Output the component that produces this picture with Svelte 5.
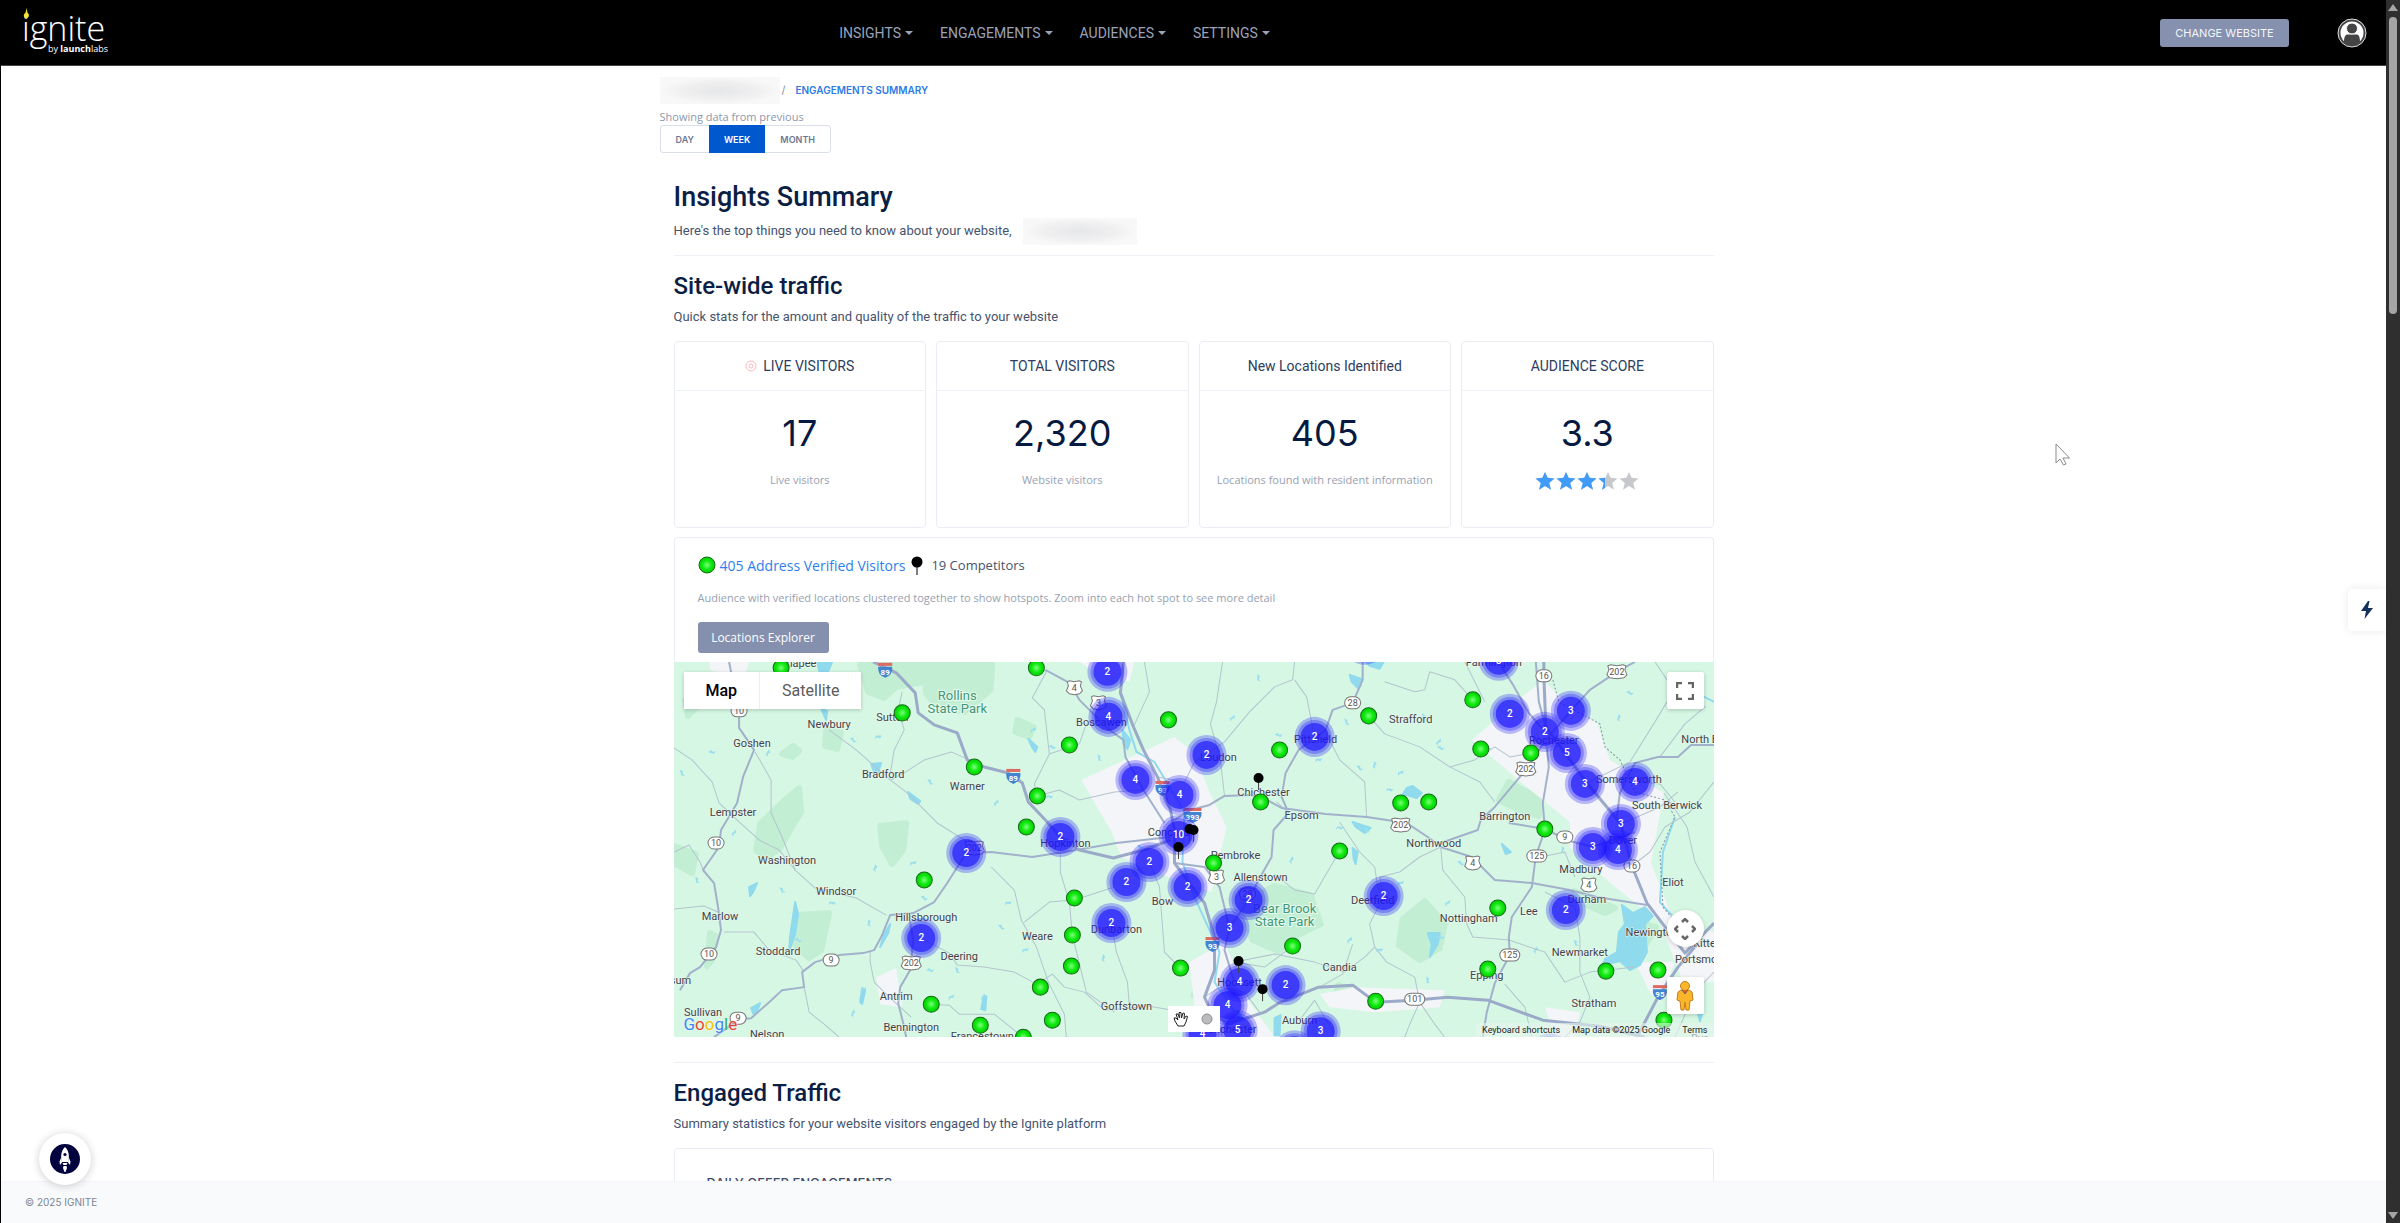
<script>
  const menus = ['INSIGHTS', 'ENGAGEMENTS', 'AUDIENCES', 'SETTINGS'];
  const periods = ['DAY', 'WEEK', 'MONTH'];
  let period = $state('WEEK');
  let mapType = $state('Map');

  const stats = [
    { title: 'LIVE VISITORS', value: '17', note: 'Live visitors', live: true },
    { title: 'TOTAL VISITORS', value: '2,320', note: 'Website visitors' },
    { title: 'New Locations Identified', value: '405', note: 'Locations found with resident information' },
    { title: 'AUDIENCE SCORE', value: '3.3', score: 3.3 }
  ];
  const star = 'M9 0L11.6 5.800L18.500 6.400L13.200 10.900L15 17.800L9 14.100L3 17.800L4.800 10.900L-.5 6.400L6.400 5.800Z';

  const visitors = [
    [107, 6], [228, 51], [362, 6], [494, 58], [395, 83], [300, 105], [363, 134], [352, 165], [250, 218],
    [400, 236], [398, 273], [397, 304], [506, 306], [366, 325], [257, 342], [306, 363], [378, 358], [349, 375],
    [694, 54], [798, 38], [605, 88], [806, 87], [856, 91], [586, 140], [726, 141], [754, 140], [870, 167],
    [665, 189], [539, 201], [823, 246], [618, 284], [813, 307], [931, 309], [983, 308], [701, 339], [989, 358]
  ];
  const clusters = [
    [433, 10, 2], [434, 55, 4], [461, 118, 4], [505, 133, 4], [504, 173, 10], [386, 175, 2], [292, 191, 2],
    [475, 200, 2], [452, 220, 2], [513, 225, 2], [437, 261, 2], [247, 276, 2], [824, -1, 3], [835, 52, 2],
    [896, 49, 3], [870, 70, 2], [892, 91, 5], [640, 75, 2], [532, 93, 2], [910, 122, 3], [960, 120, 4],
    [946, 162, 3], [918, 185, 3], [943, 188, 4], [574, 238, 2], [709, 234, 2], [891, 248, 2], [555, 266, 3],
    [565, 320, 4], [611, 323, 2], [553, 343, 4], [528, 372, 4], [563, 368, 5], [646, 369, 3], [690, -17, ''],
    [620, 388, ''], [875, 391, '']
  ];
  const pins = [[504, 185], [515, 167], [519, 168], [584, 116], [564, 299], [588, 327]];

  const towns = [
    ['Newbury', 155, 62], ['Goshen', 78, 81], ['Sutton', 218, 55], ['Bradford', 209, 112], ['Warner', 293, 124],
    ['Lempster', 59, 150], ['Washington', 113, 198], ['Windsor', 162, 229], ['Hillsborough', 252, 255],
    ['Marlow', 46, 254], ['Stoddard', 104, 289], ['Deering', 285, 294], ['Antrim', 222, 334],
    ['Bennington', 237, 365], ['Francestown', 308, 374], ['Sullivan', 29, 350], ['Nelson', 93, 372],
    ['Gilsum', 0, 318], ['Sunapee', 121, 1], ['Boscawen', 427, 60], ['Hopkinton', 391, 181],
    ['Concord', 494, 170], ['Bow', 488, 239], ['Weare', 363, 274], ['Dunbarton', 442, 267],
    ['Goffstown', 452, 344], ['Farmington', 819, 0], ['Strafford', 736, 57], ['Pittsfield', 641, 77],
    ['Loudon', 544, 95], ['Rochester', 879, 78], ['North Berwick', 1041, 77], ['Chichester', 589, 130],
    ['Epsom', 627, 153], ['Somersworth', 954, 117], ['South Berwick', 992, 143], ['Barrington', 830, 154],
    ['Northwood', 759, 181], ['Pembroke', 561, 193], ['Allenstown', 586, 215], ['Deerfield', 698, 238],
    ['Dover', 948, 178], ['Madbury', 906, 207], ['Eliot', 998, 220], ['Durham', 912, 237], ['Lee', 854, 249],
    ['Nottingham', 794, 256], ['Newington', 977, 270], ['Kittery', 1034, 281], ['Portsmouth', 1029, 297],
    ['Newmarket', 905, 290], ['Epping', 812, 313], ['Candia', 665, 305], ['Hooksett', 565, 320],
    ['Stratham', 919, 341], ['Auburn', 625, 358], ['Manchester', 553, 367], ['Rye', 1025, 376]
  ];
  const parks = [['Rollins', 283, 34], ['State Park', 283, 47], ['Bear Brook', 610, 247], ['State Park', 610, 260]];
  const interstates = [['89', 211, 8], ['89', 339, 114], ['93', 488, 126], ['393', 518, 153], ['93', 538, 282], ['95', 985, 330]];
  const usRoutes = [
    ['4', 400, 26], ['3', 424, 41], ['202', 300, 186], ['202', 237, 301], ['202', 942, 10], ['202', 851, 107],
    ['202', 726, 163], ['4', 798, 201], ['3', 542, 215], ['4', 914, 223]
  ];
  const stateRoutes = [
    ['10', 65, 49], ['10', 42, 181], ['10', 35, 292], ['9', 157, 298], ['9', 64, 356], ['16', 869, 14],
    ['28', 678, 41], ['9', 890, 175], ['125', 862, 194], ['16', 957, 204], ['28', 573, 232], ['125', 835, 293],
    ['101', 740, 337]
  ];

  const highways = [
    'M199 0L222 11L241 31L244 51L260 63L283 71L293 98L310 105L334 111L348 121L354 140L371 158L386 175L405 188L439 196L469 188L496 178',
    'M449 0L446 31L459 65L469 88L483 115L496 148L500 168L500 201L520 228L530 241L540 275L540 308L530 335L536 348L553 362',
    'M869 0L869 14L871 65L912 121L946 162L957 204L972 241L1010 291L1039 261',
    'M553 362L590 350L604 341L644 325L678 323L701 340L739 338L773 335L813 338L868 358L925 364L970 375',
    'M962 375L983 335L1003 305L1023 281'
  ];
  const mainRoads = [
    'M55 0L60 25L65 49L65 66L80 88L69 115L63 141L47 168L45 185L29 208L40 221L44 245L47 268L42 285L26 305L16 311L6 328',
    'M496 175L469 178L442 181L402 188L358 195L317 190L292 191L273 221L260 240L239 251L216 253L207 275L200 288L189 291L165 293L141 300L128 310L130 325L108 328L94 341L77 356L65 357L40 375',
    'M235 255L239 278L236 308L226 325L224 341L229 361L232 375',
    'M371 8L395 21L405 38L435 68L449 78L451 95L469 128L490 161',
    'M500 158L516 148L535 143L550 134L575 133L587 135L607 146L651 152L692 155L732 161L753 175L766 185L797 195L820 218L857 221L895 228L922 235L972 243',
    'M688 0L688 18L678 41L658 48L651 68L624 88L611 111L607 135L614 151L599 168L597 195L584 218L574 238L555 266L550 288L560 321',
    'M766 181L803 168L806 158L820 145L851 108L871 78L896 49L915 28L942 10L960 0',
    'M824 1L837 21L854 51L870 70M861 0L864 40L871 65',
    'M871 78L874 105L868 141L870 168L861 194L857 225L837 255L834 275L835 293L820 321L812 350L808 375',
    'M942 155L945 131L960 101L983 95L1003 95L1016 83L1039 83',
    'M834 161L870 167L895 179L918 185L960 170',
    'M500 201L530 205L545 225L555 266'
  ];
  const minorRoads = [
    'M81 90L97 118L97 151L108 175L121 208L141 226L182 236L212 253',
    'M155 68L182 88L199 103L216 118L233 131L263 161L290 178L300 185',
    'M0 86L18 98L38 120L45 141L65 160L85 178L105 188L121 208',
    'M216 118L230 111L250 98L277 90L295 98', 'M216 112L220 88L230 68L224 48L228 30',
    'M0 190L15 183L26 200L30 210', 'M0 247L30 244L44 250M50 270L80 270L95 288L122 298L130 310',
    'M130 325L135 350L150 362L165 375', 'M247 276L275 291L283 303L310 305L340 310L362 322L378 312L390 325L410 330L430 348L475 344L510 350',
    'M363 134L385 128L405 138L440 130L469 128', 'M360 0L372 10L358 36L370 48L375 92L360 122L363 134',
    'M375 92L405 82L412 62L430 60', 'M317 205L340 228L347 258L362 285L374 320L390 352L392 375',
    'M350 260L375 240L400 238L440 225M386 175L386 210L395 240L398 273L412 330L440 350',
    'M437 261L442 290L453 320L455 344M475 200L485 225L490 290L510 310',
    'M459 65L475 30L470 0M483 115L510 120L520 100L550 80L575 50L600 25L618 18L620 0',
    'M620 18L632 35L640 75M548 0L542 40L536 62L546 100L550 134', 'M694 54L710 72L745 85L775 105L805 120L820 140',
    'M651 70L665 98L690 120L692 155M614 151L602 140', 'M665 160L685 190L700 205L703 225L709 234L695 262L700 285L690 295L670 310L640 300L600 292L560 300',
    'M709 234L705 215L725 210L745 195L766 185L768 208L790 235L792 262L798 275L834 278L870 290L890 320L915 310L960 305',
    'M678 282L668 312L645 325M700 285L712 300L740 315L745 340L760 362L770 375M745 340L735 362L730 375',
    'M790 0L800 20L810 40M710 20L740 30L750 28L755 10L780 18L798 38',
    'M775 105L800 98L820 85L835 95L851 92', 'M866 195L890 190L900 215M870 230L900 245L905 275L905 310L915 335L905 360L890 375',
    'M1039 120L1015 150L990 165L975 190L957 204M989 131L1012 165L1020 200L1039 235', 'M980 0L1000 30L1030 45L1010 62L985 95',
    'M1000 140L985 122L960 120M1039 310L1020 330L1000 375M946 162L985 145L1003 130',
    'M257 342L275 343L285 352L320 352L345 372M237 355L215 335L200 320L196 300L196 290',
    'M585 350L570 330L545 325L530 335M625 358L640 338L660 372M857 375L850 345L830 322',
    'M618 284L590 305L560 300M665 189L640 232L620 228L600 212M912 121L955 100L980 60L1010 10'
  ];
  const forests = [
    'M186 3H258L262 18L222 25L210 36L194 30Z', 'M250 3H318L316 28L290 50L264 46L252 32Z',
    'M112 137L125 126L127 150L118 165L106 186L92 196L82 188L86 162Z', 'M206 164L232 161L229 188L218 202L208 184Z',
    'M123 253L155 251L147 288L135 296L121 283Z', 'M36 271L42 274L38 298L33 304Z', 'M108 92L119 84L125 89L118 95Z',
    'M566 242L600 224L636 233L646 262L625 272L604 289L578 278Z', 'M728 257L750 239L770 262L765 286L745 298L724 283Z',
    'M457 162L469 149L478 160L469 174Z', 'M834 120L866 138L864 154L843 147L824 138Z', 'M899 229L940 246L930 251L903 239Z',
    'M526 317L541 323L532 341L519 333Z', 'M343 58L359 65L355 75L341 70Z', 'M11 38L22 46L14 54Z', 'M0 184L22 192L18 211L0 201Z',
    'M959 259L981 265L972 281L958 273Z', 'M152 68L167 71L163 87L151 84Z', 'M664 323L686 333L678 341L659 337Z'
  ];
  const urban = [
    'M407 118L500 75L519 90L535 130L552 165L537 230L510 222L447 195L437 170Z',
    'M797 78L868 18L888 38L922 61L935 98L989 131L976 201L1000 262L1039 270V320L1008 320L985 260L940 225L895 185L895 160L847 121Z',
    'M35 0H75L72 10L58 15L36 8Z', 'M405 0H460L455 20L420 10Z', 'M202 315L222 306L228 345L206 342Z',
    'M515 300L550 280L575 340L600 375H510L520 345Z', 'M645 332L680 325L770 328L765 345L700 350L655 345Z',
    'M870 345L905 350L900 375H880Z', 'M960 300L1000 300L985 340L975 330Z'
  ];
  const lakes = [
    'M947 243L958 251L970 245L978 254L970 262L972 290L965 303L955 308L945 299L928 303L930 297L942 290L944 270L950 262Z',
    'M727 134L732 126L738 124L747 131L742 136L732 133Z', 'M143 0L158 0L153 12L145 9Z',
    'M147 47L153 49L152 58Z', 'M234 130L246 139L244 142L236 137Z', 'M121 240L124 252L121 272L115 289L116 274Z',
    'M210 272L216 262L214 271L206 285Z', 'M75 225L83 221L79 230L76 234Z', 'M77 346L86 341L83 349L80 353Z',
    'M188 326L191 328L188 342L186 340Z', 'M678 160L696 166L690 171L681 165Z', 'M678 186L683 190L681 202L679 197Z',
    'M675 13L687 17L683 26L677 20Z', 'M827 182L836 190L831 192Z', 'M753 271L765 271L763 282L755 295L757 282Z',
    'M354 77L363 85L361 90L357 84Z', 'M309 336L312 334L311 348L307 347Z', 'M197 102L207 101L204 110L201 113Z',
    'M600 356L606 353L605 373H600Z', 'M448 68L456 78L453 87L449 82Z', 'M691 0L709 0L705 7L695 4Z',
    'M1022 348L1027 352L1025 359Z', 'M562 348L568 356L565 360Z'
  ];
  const ponds = [
    [38, 90], [8, 111], [94, 91], [204, 75], [179, 78], [233, 55], [359, 68], [378, 85], [425, 96], [322, 141],
    [375, 135], [256, 120], [201, 206], [239, 201], [250, 236], [195, 261], [189, 328], [256, 308], [283, 308],
    [309, 335], [334, 241], [327, 265], [429, 296], [277, 335], [124, 278], [23, 218], [60, 171], [158, 241],
    [108, 228], [179, 351], [351, 288], [466, 185], [584, 16], [558, 56], [604, 73], [672, 60], [685, 25],
    [644, 98], [685, 106], [700, 103], [726, 111], [766, 86], [749, 55], [764, 80], [665, 166], [692, 168],
    [617, 198], [726, 221], [786, 201], [888, 188], [773, 241], [766, 275], [901, 281], [861, 288], [705, 288],
    [813, 85], [944, 56], [1006, 31], [955, 31], [753, 318], [675, 278], [715, 128]
  ];
</script>

<div class="screen">
  <div class="page">
    <header class="topbar">
      <a class="brand" href="#home" aria-label="ignite by launchlabs">
        <svg class="flame" viewBox="0 0 8 12" aria-hidden="true"><path d="M4 0C4.6 2.6 5 4.4 5.2 6C8 7.4 6.8 12 3.8 12C.6 12 0 8 2.4 6.4C3.2 4.6 3.8 3 4 0Z" /></svg>
        <span class="brand-name">ignite</span>
        <span class="brand-by">by <b>launch</b>labs</span>
      </a>
      <nav class="menus" aria-label="Main">
        {#each menus as m}
          <button class="menu">{m}<i class="caret"></i></button>
        {/each}
      </nav>
      <div class="account">
        <button class="change">CHANGE WEBSITE</button>
        <button class="avatar" aria-label="Account">
          <svg viewBox="0 0 30 30"><circle cx="15" cy="15" r="14" fill="#444447" stroke="#ddd" /><circle cx="15" cy="15" r="11.5" fill="#fff" /><path d="M7 24C7 17 9.500 16 12 16.500H18C21 16 23 17 23 24L20 26L15 28L10 26Z" fill="#444447" /><circle cx="15" cy="10.500" r="5.500" fill="#444447" stroke="#fff" /></svg>
        </button>
      </div>
    </header>

    <main>
      <div class="container">
        <nav class="crumbs" aria-label="Breadcrumb">
          <span class="redacted"></span>
          <span class="slash">/</span>
          <a href="#engagements">ENGAGEMENTS SUMMARY</a>
        </nav>
        <p class="showing">Showing data from previous</p>
        <div class="periods">
          {#each periods as p}
            <button class:active={p === period} onclick={() => (period = p)}>{p}</button>
          {/each}
        </div>

        <div class="content">
          <section class="intro">
            <h1>Insights Summary</h1>
            <p>Here's the top things you need to know about your website, <span class="redacted short"></span></p>
          </section>
          <hr />
          <section>
            <h2>Site-wide traffic</h2>
            <p class="lead">Quick stats for the amount and quality of the traffic to your website</p>
            <div class="cards">
              {#each stats as s}
                <article class="card">
                  <h3>
                    {#if s.live}
                      <svg class="pulse" viewBox="0 0 12 12" aria-hidden="true"><circle cx="6" cy="6" r="5" /><circle cx="6" cy="6" r="2" /></svg>
                    {/if}
                    {s.title}
                  </h3>
                  <strong>{s.value}</strong>
                  {#if s.score}
                    <svg class="stars" viewBox="0 0 102 18" role="img" aria-label="3.3 out of 5">
                      <defs><clipPath id="filled"><rect x="-1" width="70" height="18" /></clipPath></defs>
                      {#each [0, 21, 42, 63, 84] as x}<path d={star} transform="translate({x} 0)" fill="#c6c8cb" />{/each}
                      <g clip-path="url(#filled)">
                        {#each [0, 21, 42, 63] as x}<path d={star} transform="translate({x} 0)" fill="#419bf9" />{/each}
                      </g>
                    </svg>
                  {:else}
                    <p>{s.note}</p>
                  {/if}
                </article>
              {/each}
            </div>

            <article class="map-card">
              <div class="map-head">
                <div class="legend">
                  <svg class="dot" viewBox="0 0 18 18" aria-hidden="true"><circle cx="9" cy="9" r="8" fill="url(#green)" stroke="#176d17" /></svg>
                  <a href="#verified">405 Address Verified Visitors</a>
                  <svg class="pin" viewBox="0 0 12 19" aria-hidden="true"><path d="M6 8V19" stroke="#555" stroke-width="1.500" /><circle cx="6" cy="6" r="5.500" /></svg>
                  <span>19 Competitors</span>
                </div>
                <p>Audience with verified locations clustered together to show hotspots. Zoom into each hot spot to see more detail</p>
                <button class="explorer">Locations Explorer</button>
              </div>
              <div class="map">
                <svg class="canvas" viewBox="0 0 1039 375" preserveAspectRatio="xMidYMid slice" role="img" aria-label="Map of visitor locations">
                  <defs>
                    <radialGradient id="green"><stop offset="0" stop-color="#7dff7d" /><stop offset=".55" stop-color="#12ea12" /><stop offset="1" stop-color="#00cf00" /></radialGradient>
                  </defs>
                  <rect width="1039" height="375" fill="#d6f7e3" />
                  {#each forests as d}<path {d} class="forest" />{/each}
                  {#each urban as d}<path {d} fill="#f4f5f8" />{/each}
                  {#each lakes as d}<path {d} class="lake" />{/each}
                  {#each ponds as [x, y], i}
                    <path d="M-4 0L-1 -2L1 0L4 -1L2 2L-1 1Z" transform="translate({x} {y}) rotate({(i * 53) % 180})" fill="#9adff0" />
                  {/each}
                  <path class="river" d="M446 31L455 68L462 90L480 100L510 150L508 200L520 235L545 290L540 320L560 350M1039 40L1000 20M1000 155L988 190L985 240L1005 262L1039 285" />
                  <path class="border" d="M878 18L884 40L925 62L930 85L945 98L960 130L990 138L1000 155L985 190L988 245L1005 265" />
                  {#each minorRoads as d}<path {d} class="minor" />{/each}
                  {#each mainRoads as d}<path {d} class="major" />{/each}
                  {#each highways as d}<path {d} class="highway" />{/each}

                  {#each stateRoutes as [n, x, y]}
                    <rect x={x - (n.length > 2 ? 10 : 8)} y={y - 6} width={n.length > 2 ? 20 : 16} height="12" rx="6" class="shield" />
                    <text {x} y={y + 3} class="route">{n}</text>
                  {/each}
                  {#each usRoutes as [n, x, y]}
                    <path transform="translate({x} {y})" d={n.length > 2 ? 'M-9 -6L-6 -7L0 -6L6 -7L9 -6L8 -2L10 3L7 6L0 7L-7 6L-10 3L-8 -2Z' : 'M-7 -6L-5 -7L0 -6L5 -7L7 -6L6 -2L8 3L5 6L0 7L-5 6L-8 3L-6 -2Z'} class="shield" />
                    <text {x} y={y + 3} class="route">{n}</text>
                  {/each}
                  {#each interstates as [n, x, y]}
                    <g transform="translate({x} {y})">
                      <path d={n.length > 2 ? 'M-9 -3H9Q10 5 0 8Q-10 5 -9 -3Z' : 'M-7 -3H7Q8 5 0 8Q-8 5 -7 -3Z'} fill="#4484cf" />
                      <rect x={n.length > 2 ? -9 : -7} y="-7" width={n.length > 2 ? 18 : 14} height="3" fill="#de6a62" />
                      <text y="5" class="route inter">{n}</text>
                    </g>
                  {/each}
                  {#each towns as [n, x, y]}<text {x} y={y + 4} class="town">{n}</text>{/each}
                  {#each parks as [n, x, y]}<text {x} y={y + 4} class="park">{n}</text>{/each}

                  {#each clusters as [x, y]}
                    <g fill="#1c14ff">
                      <circle cx={x} cy={y} r="20" opacity=".28" />
                      <circle cx={x} cy={y} r="17" opacity=".3" />
                      <circle cx={x} cy={y} r="14" opacity=".65" />
                    </g>
                  {/each}
                  {#each pins as [x, y]}
                    <path d="M{x} {y}V{y + 12}" stroke="#444" /><circle cx={x} cy={y} r="5" />
                  {/each}
                  {#each clusters as [x, y, n]}<text {x} y={y + 3} class="count">{n}</text>{/each}
                  {#each visitors as [x, y]}<circle cx={x} cy={y} r="8" fill="url(#green)" stroke="#176d17" />{/each}
                </svg>

                <div class="types">
                  {#each ['Map', 'Satellite'] as t}
                    <button class:on={t === mapType} onclick={() => (mapType = t)}>{t}</button>
                  {/each}
                </div>
                <button class="tool full" aria-label="Toggle fullscreen view"><svg viewBox="0 0 18 18"><path d="M1 6V1H6M12 1H17V6M17 12V17H12M6 17H1V12" /></svg></button>
                <button class="tool pan" aria-label="Map camera controls"><svg viewBox="0 0 22 22"><path d="M8 4L11 1L14 4M8 18L11 21L14 18M4 8L1 11L4 14M18 8L21 11L18 14" /></svg></button>
                <button class="tool peg" aria-label="Street View">
                  <svg viewBox="0 0 18 30"><path d="M5 9H13L16 11L17 19L14 20L13 29H10L9 21L8 29H5L4 20L1 19L2 11Z" fill="#fbb62b" stroke="#c47d17" /><circle cx="9" cy="5" r="4.500" fill="#fbb62b" stroke="#c47d17" /><path d="M6 9L9 13L12 9" fill="#e2631d" /></svg>
                </button>
                <div class="draw">
                  <button aria-label="Stop drawing"><svg viewBox="0 0 16 16"><path d="M5 15L2 10L1 7L3 7L5 9L3 3L5 3L6.500 7L6 1.500L8 1.500L8.500 7L10 2L11.500 2.500L11 8L13 5L14.500 5.500L13 11L11 15Z" fill="#fff" stroke="#222" stroke-linejoin="round" /></svg></button>
                  <button aria-label="Draw a circle"><svg viewBox="0 0 16 16"><circle cx="8" cy="8" r="5" fill="#bcbcbe" stroke="#8e8e92" /></svg></button>
                </div>
                <div class="google" aria-label="Google"><b>G</b><b>o</b><b>o</b><b>g</b><b>l</b><b>e</b></div>
                <div class="legal"><button>Keyboard shortcuts</button><span>Map data ©2025 Google</span><a href="#terms">Terms</a></div>
              </div>
            </article>
          </section>
          <hr />
          <section>
            <h2>Engaged Traffic</h2>
            <p class="lead">Summary statistics for your website visitors engaged by the Ignite platform</p>
            <article class="offers"><h4>DAILY OFFER ENGAGEMENTS</h4></article>
          </section>
        </div>
      </div>
    </main>

    <footer>© 2025 IGNITE</footer>

    <button class="launcher" aria-label="Open launcher">
      <svg viewBox="0 0 30 30"><circle cx="15" cy="15" r="15" fill="#02023f" /><g fill="#fff"><path d="M15 3C18.500 6 19.500 11 18.500 18H11.500C10.500 11 11.500 6 15 3Z" /><path d="M11 14L9.500 17.500L10 21L12 18.500ZM19 14L20.500 17.500L20 21L18 18.500Z" /><path d="M12.500 19H17.500L16.500 21H13.500ZM13.500 22H16.500L17 24L15.500 28H14.500L13 24Z" /></g><circle cx="15" cy="10.500" r="1.600" fill="#02023f" /></svg>
    </button>
    <button class="bolt" aria-label="Quick actions"><svg viewBox="0 0 12 18"><path d="M7 0L0 10H5L3.500 18L12 7H7L8.500 0Z" /></svg></button>
    <svg class="cursor" viewBox="0 0 16 23" aria-hidden="true"><path d="M1 1V20L5 16L8.500 22L11 21L8 15H14.500Z" /></svg>
  </div>

  <div class="scroll" aria-hidden="true">
    <i class="up"></i><div class="track"><div class="thumb"></div></div><i class="down"></i>
  </div>
</div>

<style>
  :global(body) { margin: 0; }
  .screen { display: flex; height: 100vh; overflow: hidden; background: #fff; color: #46536d; font-family: Roboto, "Liberation Sans", sans-serif; font-size: 13px; }
  .screen :global(*) { box-sizing: border-box; }
  button { font: inherit; color: inherit; border: 0; padding: 0; background: none; cursor: pointer; }
  a { text-decoration: none; }
  h1, h2, h3, h4, p { margin: 0; font-weight: 400; }
  svg { display: block; }

  .page { position: relative; flex: 1; display: flex; flex-direction: column; border-left: 1px solid #000; min-width: 0; }
  .topbar { flex: none; height: 66px; display: grid; grid-template-columns: 1fr auto 1fr; align-items: center; background: #000; border-bottom: 1px solid #444; padding: 0 19px 0 21px; color: #fff; }
  .brand { position: relative; display: flex; flex-direction: column; width: 86px; color: #fff; line-height: 1; }
  .brand-name { font: 34px/34px "Open Sans", sans-serif; font-weight: 300; }
  .brand-by { font: 9px/10px "Open Sans", sans-serif; align-self: flex-end; margin-top: -1px; }
  .flame { position: absolute; left: 1px; top: -4px; width: 7px; height: 12px; fill: #f5e532; }
  .menus { display: flex; gap: 27px; font: 14px/20px Roboto, sans-serif; color: #9ba3b9; margin-right: 280px; }
  .menu { display: flex; align-items: center; gap: 4px; }
  .caret { border: 4px solid transparent; border-top-color: currentColor; border-bottom: 0; }
  .account { display: flex; justify-content: flex-end; align-items: center; gap: 48px; }
  .change { background: #8591ae; border-radius: 3px; height: 28px; width: 129px; font: 11px Inter, sans-serif; color: #f4f6fb; }
  .avatar svg { width: 30px; height: 30px; }

  main { flex: 1; overflow: hidden; min-height: 0; }
  .container { max-width: 1068px; margin: 0 auto; padding-top: 10px; }
  .crumbs { display: flex; align-items: center; height: 28px; font: 600 10px Inter, sans-serif; color: #8a93a8; }
  .crumbs a { color: #2d7be5; }
  .slash { margin: 0 10px 0 2px; font-weight: 400; font-size: 11px; }
  .redacted { width: 120px; height: 27px; background: radial-gradient(closest-side, #e6e7e9, #efeff0 60%, #f8f8f9); display: inline-block; }
  .short { width: 114px; margin-left: 8px; vertical-align: middle; }
  .showing { font: 11px/18px "Open Sans", sans-serif; margin-top: 4px; color: #8d97aa; }
  .periods { display: flex; width: max-content; margin-top: -1px; border: 1px solid #d9dee7; border-radius: 3px; height: 28px; }
  .periods button { padding: 0 15px; font: 600 9px Inter, sans-serif; color: #6c7893; }
  .periods .active { background: #0058cf; color: #fff; margin: -1px 0; }
  .content { padding: 0 14px; }
  .intro { padding-top: 26px; }
  h1 { font-size: 27px; line-height: 36px; font-weight: 500; color: #0b1e44; }
  .intro p { height: 32px; line-height: 32px; }
  hr { border: 0; border-top: 1px solid #edf0f5; margin: 8px 0 0; }
  h2 { font-size: 24px; line-height: 30px; font-weight: 500; color: #0b1e44; margin-top: 15px; }
  .lead { line-height: 20px; margin: 6px 0 14px; }
  .cards { display: grid; grid-template-columns: repeat(4, 1fr); gap: 10px; }
  .card { border: 1px solid #eaedf3; border-radius: 4px; height: 187px; display: flex; flex-direction: column; align-items: center; }
  .card h3 { align-self: stretch; height: 49px; display: flex; align-items: center; justify-content: center; gap: 6px; border-bottom: 1px solid #eef1f5; font-size: 14px; color: #2c3d60; }
  .card strong { font: 400 36px/44px Inter, sans-serif; color: #061a41; margin: 20px 0 15px; }
  .card p { font: 11px/20px "Open Sans", sans-serif; color: #98a0b1; }
  .pulse { width: 12px; height: 12px; fill: none; stroke: #ffb9bf; }
  .stars { width: 102px; height: 18px; margin-top: 2px; overflow: visible; }

  .map-card { margin-top: 9px; border: 1px solid #eaedf3; border-bottom: 0; border-radius: 4px 4px 0 0; }
  .map-head { padding: 14px 23px 9px; font-family: "Open Sans", sans-serif; }
  .legend { display: flex; align-items: center; height: 26px; }
  .legend a { color: #2d7fee; font-size: 14px; margin: 0 6px 0 4px; }
  .legend span { font-size: 13px; }
  .dot { width: 18px; height: 18px; }
  .pin { width: 12px; height: 19px; margin-right: 8px; }
  .map-head p { font-size: 11px; line-height: 20px; margin: 10px 0 14px; color: #979fb0; }
  .explorer { display: block; height: 31px; width: 131px; border-radius: 3px; background: #8490ad; color: #fff; font-size: 12px; }
  .map { position: relative; height: 375px; margin: 0 -1px; overflow: hidden; }
  .canvas { width: 100%; height: 100%; }
  .forest { fill: #c2eed4; stroke: #c2eed4; stroke-width: 6; stroke-linejoin: round; }
  .lake { fill: #90daee; stroke: #90daee; stroke-width: 2; stroke-linejoin: round; }
  .river { fill: none; stroke: #90daee; stroke-width: 2; }
  .border { fill: none; stroke: #87939f; stroke-dasharray: 2 2; }
  .minor, .major, .highway { fill: none; stroke: #b3c5cf; stroke-linejoin: round; }
  .major { stroke: #a2b1cb; stroke-width: 2; }
  .highway { stroke: #9baac8; stroke-width: 3; }
  text { font-family: Roboto, sans-serif; text-anchor: middle; }
  .town { font-size: 11px; fill: #3f4349; stroke: #eef8f2; stroke-width: 1px; paint-order: stroke; }
  .park { font-size: 13px; fill: #429776; stroke: #e8fbf0; stroke-width: 2px; paint-order: stroke; }
  .count { font-size: 10px; font-weight: 500; fill: #fff; }
  .route { font-size: 9px; fill: #555; }
  .inter { fill: #fff; font-size: 8px; font-weight: 700; }
  .shield { fill: #fff; stroke: #777; }
  .types { position: absolute; left: 10px; top: 10px; display: flex; height: 37px; background: #fff; box-shadow: 0 1px 4px #0003; font-size: 16px; color: #5c5c5c; }
  .types button { padding: 0 22px; }
  .types button + button { border-left: 1px solid #eee; }
  .types .on { color: #000; font-weight: 500; }
  .tool { position: absolute; right: 10px; width: 37px; height: 37px; display: grid; place-items: center; background: #fff; border-radius: 2px; box-shadow: 0 1px 4px #0003; }
  .tool svg { width: 18px; height: 18px; fill: none; stroke: #666; stroke-width: 2.5px; }
  .full { top: 10px; }
  .pan { bottom: 90px; border-radius: 50%; }
  .pan svg { width: 22px; height: 22px; }
  .peg { bottom: 23px; }
  .peg svg { height: 30px; stroke-width: 1px; }
  .draw { position: absolute; left: 494px; bottom: 5px; display: flex; height: 26px; background: #fff; }
  .draw button { width: 26px; display: grid; place-items: center; }
  .draw svg { width: 16px; height: 16px; }
  .google { position: absolute; left: 10px; bottom: 1px; font-size: 17px; line-height: 24px; }
  .google b { font-weight: 400; color: #4285f4; text-shadow: 0 0 2px #fff; }
  .google b:nth-child(2), .google b:nth-child(6) { color: #ea4335; }
  .google b:nth-child(3) { color: #fbbc05; }
  .google b:nth-child(5) { color: #34a853; }
  .legal { position: absolute; right: 0; bottom: 0; display: flex; gap: 12px; padding: 0 6px; font-size: 9px; line-height: 14px; color: #222; background: #e8f5f099; }
  .legal a { color: inherit; }

  section + hr { margin-top: 25px; }
  .intro + hr { margin-top: 8px; }
  .offers { border: 1px solid #e9edf3; border-radius: 4px; height: 200px; padding: 25px 32px; }
  h4 { font: 500 13px/18px Inter, sans-serif; color: #3f4c66; }

  footer { flex: none; height: 42px; padding: 0 24px; background: #f9fafc; border-top: 1px solid #f3f5f8; font: 10px/41px Inter, sans-serif; color: #7b8596; }
  .launcher { position: absolute; left: 38px; bottom: 38px; width: 52px; height: 52px; border-radius: 50%; background: #fff; box-shadow: 0 1px 8px #0003; display: grid; place-items: center; }
  .launcher svg { width: 30px; height: 30px; }
  .bolt { position: absolute; right: 0; top: 589px; width: 38px; height: 42px; border-radius: 4px 0 0 4px; background: #fff; box-shadow: 0 0 8px #00000018; display: grid; place-items: center; }
  .bolt svg { width: 12px; height: 18px; fill: #16305c; }
  .cursor { position: absolute; left: 2054px; top: 443px; width: 16px; height: 23px; fill: #fff; stroke: #8b8b8b; }

  .scroll { flex: none; width: 14px; background: #2f2f30; display: flex; flex-direction: column; align-items: center; padding: 4px 0; gap: 6px; }
  .track { flex: 1; width: 8px; }
  .thumb { height: 25%; border-radius: 4px; background: #a5a5a6; }
  .up, .down { border: 5px solid transparent; }
  .up { border-top: 0; border-bottom: 7px solid #a5a5a6; }
  .down { border-bottom: 0; border-top: 7px solid #a5a5a6; }
</style>
